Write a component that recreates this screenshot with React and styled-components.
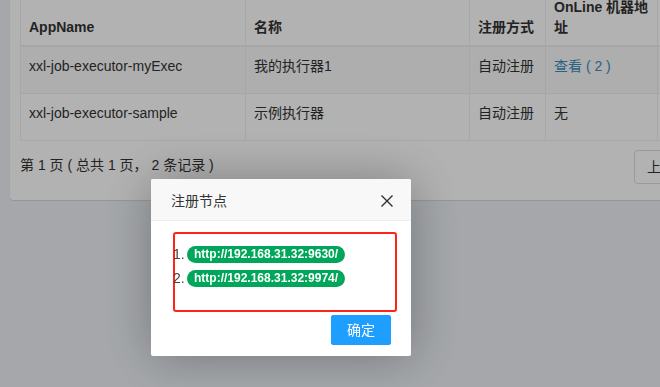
import styled, { createGlobalStyle } from "styled-components";

const Global = createGlobalStyle`
  html, body {
    margin: 0;
    background: #ecf0f5;
    overflow: hidden;
  }
  body {
    font-family: "Liberation Sans", Arial, "Noto Sans CJK SC", sans-serif;
    font-size: 14px;
    color: #333;
  }
`;

const Page = styled.div`
  width: 800px;
  height: 387px;
  padding-left: 10px;
`;

const Card = styled.div`
  margin-top: -22px;
  width: 749px;
  background: #fff;
  border-radius: 3px;
  box-shadow: 0 1px 1px rgba(0, 0, 0, 0.1);
  padding: 10px 10px 16px 10px;
`;

const Table = styled.table`
  width: 749px;
  table-layout: fixed;
  border-collapse: collapse;
  border: 1px solid #efefef;
`;

const Th = styled.th`
  text-align: left;
  vertical-align: bottom;
  padding: 8px;
  line-height: 20px;
  font-weight: bold;
  border: 1px solid #efefef;
  border-bottom-width: 2px;
`;

const Row = styled.tr`
  background: ${(p) => (p.$striped ? "#f9f9f9" : "#fff")};
`;

const Td = styled.td`
  padding: 9px 8px 17px;
  line-height: 20px;
  border: 1px solid #efefef;
  white-space: nowrap;
  overflow: hidden;
`;

const Link = styled.a`
  color: #3c8dbc;
  text-decoration: none;
`;

const Pager = styled.div`
  display: flex;
  justify-content: space-between;
  align-items: flex-start;
  margin-top: 9px;
`;

const Info = styled.span`
  line-height: 20px;
  padding-top: 5px;
`;

const PageBtns = styled.div`
  display: flex;
`;

const PageBtn = styled.a`
  padding: 6px 12px;
  line-height: 20px;
  border: 1px solid #ddd;
  color: #333;
  background: #fff;
  margin-left: ${(p) => (p.$first ? "0" : "-1px")};
  border-radius: ${(p) => (p.$first ? "4px 0 0 4px" : "0 4px 4px 0")};
`;

const Shade = styled.div`
  position: fixed;
  inset: 0;
  background: rgba(0, 0, 0, 0.3);
`;

const Modal = styled.div`
  position: fixed;
  left: 151px;
  top: 179px;
  width: 260px;
  background: #fff;
  border-radius: 2px;
  box-shadow: 1px 1px 50px rgba(0, 0, 0, 0.3);
`;

const ModalHead = styled.div`
  box-sizing: border-box;
  height: 42px;
  display: flex;
  align-items: center;
  justify-content: space-between;
  padding: 0 18px 0 20px;
  background: #f8f8f8;
  border-bottom: 1px solid #eee;
  color: #333;
  border-radius: 2px 2px 0 0;
`;

const Close = styled.svg`
  width: 12px;
  height: 12px;
  margin-top: 2px;
`;

const ModalBody = styled.div`
  padding: 11px 14px 0 22px;
`;

const Marked = styled.div`
  border: 2px solid #ff2418;
  border-radius: 3px;
  padding: 8px 0 20px 0;
`;

const Item = styled.div`
  display: flex;
  align-items: center;
  height: 24px;
`;

const Num = styled.span`
  width: 12px;
  margin-left: -2px;
  color: #444;
`;

const Pill = styled.span`
  margin-left: 2px;
  height: 17px;
  line-height: 17px;
  padding: 0 7px;
  border-radius: 9px;
  background: #00a65a;
  color: #fff;
  font-size: 12px;
  font-weight: bold;
`;

const ModalFoot = styled.div`
  display: flex;
  justify-content: flex-end;
  padding: 3px 20px 11px;
`;

const OkBtn = styled.a`
  height: 28px;
  line-height: 28px;
  padding: 0 15px;
  background: #1e9fff;
  border: 1px solid #1e9fff;
  border-radius: 2px;
  color: #fff;
`;

const rows = [
  { app: "xxl-job-executor-myExec", name: "我的执行器1", type: "自动注册", online: "查看 ( 2 )" },
  { app: "xxl-job-executor-sample", name: "示例执行器", type: "自动注册", online: null },
];

const nodes = ["http://192.168.31.32:9630/", "http://192.168.31.32:9974/"];

export default function App() {
  return (
    <Page>
      <Global />
      <Card>
        <Table>
          <colgroup>
            <col style={{ width: 225 }} />
            <col style={{ width: 224 }} />
            <col style={{ width: 76 }} />
            <col style={{ width: 112 }} />
            <col />
          </colgroup>
          <thead>
            <tr>
              <Th>AppName</Th>
              <Th>名称</Th>
              <Th>注册方式</Th>
              <Th>OnLine 机器地址</Th>
              <Th>操作</Th>
            </tr>
          </thead>
          <tbody>
            {rows.map((r, i) => (
              <Row key={r.app} $striped={i % 2 === 0}>
                <Td>{r.app}</Td>
                <Td>{r.name}</Td>
                <Td>{r.type}</Td>
                <Td>{r.online ? <Link href="#">{r.online}</Link> : "无"}</Td>
                <Td></Td>
              </Row>
            ))}
          </tbody>
        </Table>
        <Pager>
          <Info>第 1 页 ( 总共 1 页， 2 条记录 )</Info>
          <PageBtns>
            <PageBtn $first>上一页</PageBtn>
            <PageBtn>下一页</PageBtn>
          </PageBtns>
        </Pager>
      </Card>
      <Shade />
      <Modal>
        <ModalHead>
          <span>注册节点</span>
          <Close viewBox="0 0 12 12">
            <path d="M0.5 0.5 L11.5 11.5 M11.5 0.5 L0.5 11.5" stroke="#2f2f2f" strokeWidth="1.4" fill="none" />
          </Close>
        </ModalHead>
        <ModalBody>
          <Marked>
            {nodes.map((n, i) => (
              <Item key={n}>
                <Num>{i + 1}.</Num>
                <Pill>{n}</Pill>
              </Item>
            ))}
          </Marked>
        </ModalBody>
        <ModalFoot>
          <OkBtn>确定</OkBtn>
        </ModalFoot>
      </Modal>
    </Page>
  );
}
